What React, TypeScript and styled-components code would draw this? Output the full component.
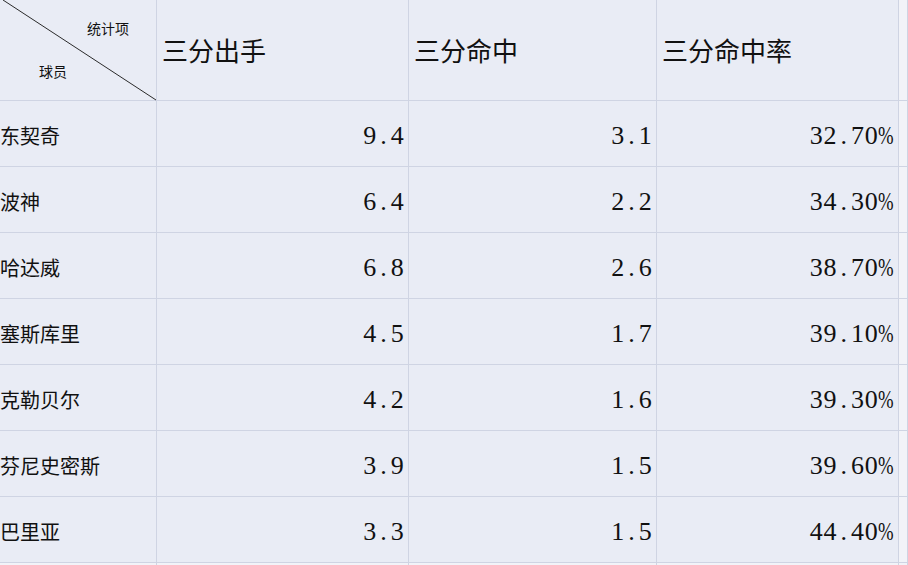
import React from 'react';
import styled, { createGlobalStyle } from 'styled-components';

const GlobalStyle = createGlobalStyle`
  html, body {
    margin:0;
    padding:0;
    background:#F2F3F8;
    overflow:hidden;
  }
  body {
    font-family:"Noto Sans CJK SC", "Liberation Sans", sans-serif;
    color:#111;
  }
`;

const Sheet = styled.div`
  display:grid;
  grid-template-columns:157px 252px 248px 242px 1fr;
  grid-template-rows:101px repeat(7, 66px) 40px;
  width:908px;
  height:565px;
  overflow:hidden;
`;

const Cell = styled.div<{ $align?: 'left' | 'right'; $blank?: boolean }>`
  box-sizing:border-box;
  border-right:1px solid #CFD4E3;
  border-bottom:1px solid #CFD4E3;
  background:${p => (p.$blank ? '#F2F3F8' : '#E9ECF5')};
  display:flex;
  align-items:center;
  justify-content:${p => (p.$align === 'right' ? 'flex-end' : 'flex-start')};
  padding:5px ${p => (p.$align === 'right' ? '4px' : '0')} 0 0;
`;

const HeadCell = styled(Cell)`
  padding:0 0 0 5px;
  font-size:26px;
  line-height:1;
`;

const Corner = styled.div`
  position:relative;
  box-sizing:border-box;
  border-right:1px solid #CFD4E3;
  border-bottom:1px solid #CFD4E3;
  background:#E9ECF5;
  display:flex;
  flex-direction:column;
  padding-top:19px;
  font-size:14px;
  line-height:18px;
  > svg {
    position:absolute;
    left:0;
    top:0;
  }
  > .item {
    align-self:flex-end;
    margin-right:27px;
  }
  > .player {
    margin:25px 0 0 39px;
  }
`;

const Name = styled.span`
  font-size:20px;
  line-height:1;
`;

const Num = styled.span`
  display:flex;
  font-family:"Liberation Serif", "DejaVu Serif", serif;
  font-size:26px;
  line-height:1;
  color:#111;
`;

const Glyph = styled.span<{ $narrow?: boolean }>`
  display:inline-block;
  width:${p => (p.$narrow ? '16px' : '13.75px')};
  text-align:${p => (p.$narrow ? 'left' : 'center')};
  transform:${p => (p.$narrow ? 'scaleX(0.72)' : 'none')};
  transform-origin:left center;
  white-space:nowrap;
`;

const rows = [
  ['东契奇', '9.4', '3.1', '32.70%'],
  ['波神', '6.4', '2.2', '34.30%'],
  ['哈达威', '6.8', '2.6', '38.70%'],
  ['塞斯库里', '4.5', '1.7', '39.10%'],
  ['克勒贝尔', '4.2', '1.6', '39.30%'],
  ['芬尼史密斯', '3.9', '1.5', '39.60%'],
  ['巴里亚', '3.3', '1.5', '44.40%'],
];

function Value({ text }: { text: string }) {
  return (
    <Num>
      {text.split('').map((c, i) => (
        <Glyph key={i} $narrow={c === '%'}>{c}</Glyph>
      ))}
    </Num>
  );
}

function App() {
  return (
    <>
      <GlobalStyle />
      <Sheet>
        <Corner>
          <svg width="157" height="101">
            <line x1="3" y1="0" x2="156" y2="100" stroke="#2a2a2a" strokeWidth="1" />
          </svg>
          <span className="item">统计项</span>
          <span className="player">球员</span>
        </Corner>
        <HeadCell>三分出手</HeadCell>
        <HeadCell>三分命中</HeadCell>
        <HeadCell>三分命中率</HeadCell>
        <Cell $blank />
        {rows.map(r => (
          <React.Fragment key={r[0]}>
            <Cell><Name>{r[0]}</Name></Cell>
            <Cell $align="right"><Value text={r[1]} /></Cell>
            <Cell $align="right"><Value text={r[2]} /></Cell>
            <Cell $align="right"><Value text={r[3]} /></Cell>
            <Cell $blank />
          </React.Fragment>
        ))}
        <Cell $blank />
        <Cell $blank />
        <Cell $blank />
        <Cell $blank />
        <Cell $blank />
      </Sheet>
    </>
  );
}

export default App;
